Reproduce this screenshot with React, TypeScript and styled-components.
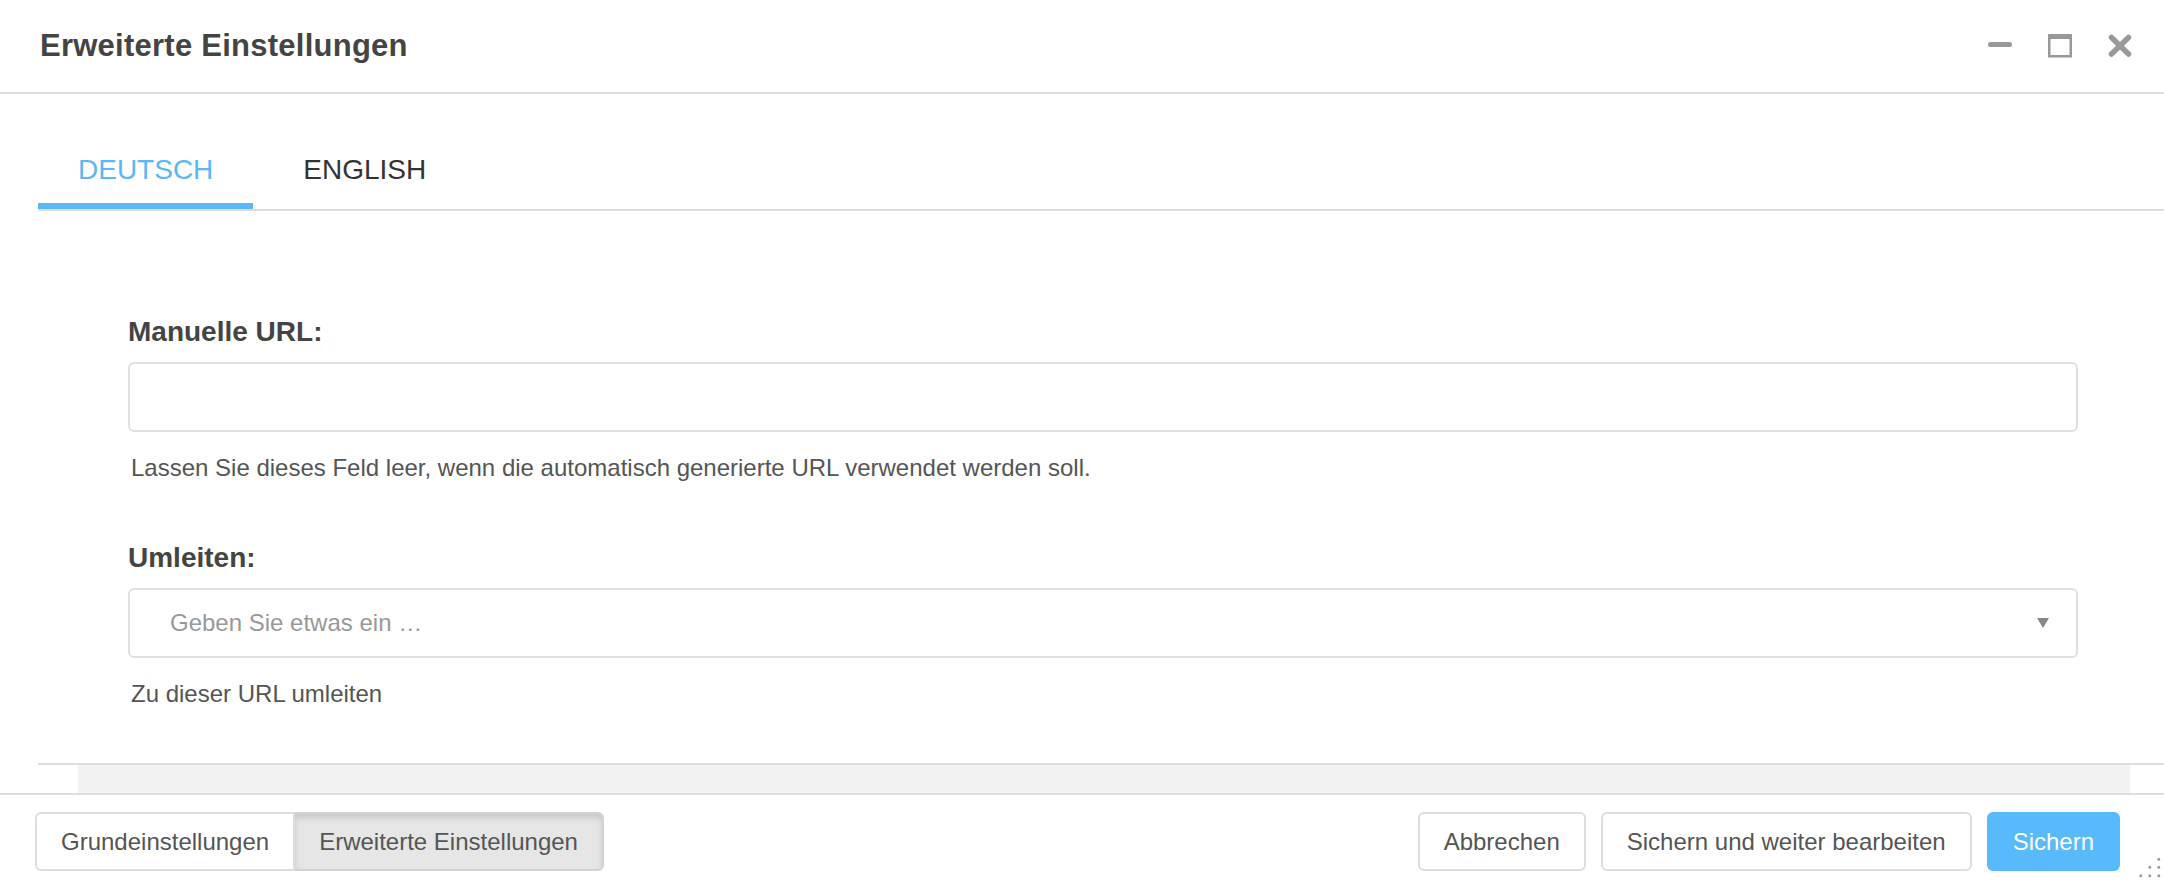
import React from 'react';
import styled, { createGlobalStyle, css } from 'styled-components';

const GlobalStyle = createGlobalStyle`
  html, body { margin: 0; padding: 0; background: #ffffff; }
  body { font-family: "Liberation Sans", Arial, Helvetica, sans-serif; }
  *, *::before, *::after { box-sizing: border-box; }
`;

const Window = styled.div`
  position: relative;
  width: 2164px;
  height: 886px;
  display: flex;
  flex-direction: column;
  background: #ffffff;
  overflow: hidden;
`;

const Header = styled.header`
  flex: none;
  height: 94px;
  display: flex;
  align-items: center;
  justify-content: space-between;
  padding: 0 32px 0 40px;
  border-bottom: 2px solid #dddddd;
`;

const Title = styled.h1`
  margin: 0;
  font-size: 31px;
  line-height: 36px;
  font-weight: 700;
  letter-spacing: 0.25px;
  color: #444444;
`;

const Controls = styled.div`
  display: flex;
  align-items: center;
  gap: 36px;
`;

const ControlButton = styled.button`
  display: flex;
  width: 24px;
  height: 24px;
  padding: 0;
  border: none;
  background: none;
  cursor: pointer;
  color: #999999;
`;

const TabsPanel = styled.section`
  flex: 1;
  min-height: 0;
  margin-left: 38px;
  display: flex;
  flex-direction: column;
  border-bottom: 2px solid #dddddd;
`;

const TabList = styled.div`
  flex: none;
  display: flex;
  gap: 10px;
  border-bottom: 2px solid #dddddd;
`;

const Tab = styled.button<{ $active?: boolean }>`
  padding: 59px 40px 16px;
  border: none;
  border-bottom: 6px solid ${(p) => (p.$active ? '#5ab8f7' : 'transparent')};
  background: none;
  font-family: inherit;
  font-size: 28px;
  line-height: 34px;
  color: ${(p) => (p.$active ? '#5ab8f7' : '#333333')};
  cursor: pointer;
`;

const Content = styled.div`
  flex: 1;
  padding: 104px 86px 0 90px;
`;

const Field = styled.div`
  display: flex;
  flex-direction: column;
  & + & {
    margin-top: 58px;
  }
`;

const Label = styled.label`
  font-size: 28px;
  line-height: 34px;
  font-weight: 700;
  color: #444444;
  margin-bottom: 13px;
`;

const TextInput = styled.input`
  width: 100%;
  height: 70px;
  border: 2px solid #e0e0e0;
  border-radius: 6px;
  padding: 0 20px;
  font-family: inherit;
  font-size: 24px;
  color: #333;
  outline: none;
`;

const SelectBox = styled.div`
  height: 70px;
  display: flex;
  align-items: center;
  border: 2px solid #e0e0e0;
  border-radius: 6px;
  padding: 0 27px 0 40px;
  cursor: pointer;
`;

const Placeholder = styled.span`
  flex: 1;
  font-size: 24px;
  line-height: 30px;
  color: #999999;
`;

const Help = styled.div`
  margin-top: 21px;
  padding-left: 3px;
  font-size: 24px;
  line-height: 30px;
  color: #555555;
`;

const Track = styled.div`
  flex: none;
  height: 28px;
  margin: 0 34px 0 78px;
  background: #f2f2f2;
`;

const Footer = styled.footer`
  flex: none;
  height: 93px;
  border-top: 2px solid #dddddd;
  padding: 17px 44px 0 35px;
  display: flex;
  justify-content: space-between;
  align-items: flex-start;
`;

const ButtonGroup = styled.div`
  display: flex;
`;

const Actions = styled.div`
  display: flex;
  gap: 15px;
`;

type Variant = 'default' | 'active' | 'primary';
type Join = 'none' | 'first' | 'last';

const Button = styled.button<{ $variant?: Variant; $join?: Join }>`
  height: 59px;
  padding: 0 24px;
  border: 2px solid #dddddd;
  border-radius: 6px;
  background: #ffffff;
  color: #555555;
  font-family: inherit;
  font-size: 24px;
  line-height: 1;
  cursor: pointer;
  white-space: nowrap;
  ${(p) =>
    p.$join === 'first' &&
    css`
      border-radius: 6px 0 0 6px;
    `}
  ${(p) =>
    p.$join === 'last' &&
    css`
      border-radius: 0 6px 6px 0;
      border-left: none;
    `}
  ${(p) =>
    p.$variant === 'active' &&
    css`
      background: #e6e6e6;
      border-color: #d2d2d2;
      box-shadow: inset 0 4px 6px rgba(0, 0, 0, 0.13);
    `}
  ${(p) =>
    p.$variant === 'primary' &&
    css`
      background: #58b9fb;
      border-color: #58b9fb;
      color: #ffffff;
    `}
`;

const Grip = styled.svg`
  position: absolute;
  right: 0;
  bottom: 0;
  width: 28px;
  height: 32px;
`;

const MinimizeIcon = () => (
  <svg width="24" height="24" viewBox="0 0 24 24">
    <rect x="0" y="8" width="24" height="5" rx="2.5" fill="currentColor" />
  </svg>
);

const MaximizeIcon = () => (
  <svg width="24" height="24" viewBox="0 0 24 24">
    <rect x="1.25" y="1.25" width="21.5" height="21" fill="none" stroke="currentColor" strokeWidth="2.5" />
    <rect x="0" y="0" width="24" height="5" fill="currentColor" />
  </svg>
);

const CloseIcon = () => (
  <svg width="24" height="24" viewBox="0 0 24 24">
    <path d="M3.5 3.5 L20.5 20 M20.5 3.5 L3.5 20" stroke="currentColor" strokeWidth="5.5" strokeLinecap="round" />
  </svg>
);

const ArrowDown = () => (
  <svg width="12" height="10" viewBox="0 0 12 10">
    <path d="M0 0 H12 L6 10 Z" fill="#888888" />
  </svg>
);

export default function App() {
  const [tab, setTab] = React.useState<'de' | 'en'>('de');
  return (
    <>
      <GlobalStyle />
      <Window>
        <Header>
          <Title>Erweiterte Einstellungen</Title>
          <Controls>
            <ControlButton aria-label="Minimieren">
              <MinimizeIcon />
            </ControlButton>
            <ControlButton aria-label="Maximieren">
              <MaximizeIcon />
            </ControlButton>
            <ControlButton aria-label="Schließen">
              <CloseIcon />
            </ControlButton>
          </Controls>
        </Header>

        <TabsPanel>
          <TabList>
            <Tab $active={tab === 'de'} onClick={() => setTab('de')}>
              DEUTSCH
            </Tab>
            <Tab $active={tab === 'en'} onClick={() => setTab('en')}>
              ENGLISH
            </Tab>
          </TabList>
          <Content>
            <Field>
              <Label>Manuelle URL:</Label>
              <TextInput type="text" />
              <Help>Lassen Sie dieses Feld leer, wenn die automatisch generierte URL verwendet werden soll.</Help>
            </Field>
            <Field>
              <Label>Umleiten:</Label>
              <SelectBox>
                <Placeholder>Geben Sie etwas ein …</Placeholder>
                <ArrowDown />
              </SelectBox>
              <Help>Zu dieser URL umleiten</Help>
            </Field>
          </Content>
        </TabsPanel>

        <Track />

        <Footer>
          <ButtonGroup>
            <Button $join="first">Grundeinstellungen</Button>
            <Button $join="last" $variant="active">
              Erweiterte Einstellungen
            </Button>
          </ButtonGroup>
          <Actions>
            <Button>Abbrechen</Button>
            <Button>Sichern und weiter bearbeiten</Button>
            <Button $variant="primary">Sichern</Button>
          </Actions>
        </Footer>

        <Grip viewBox="0 0 28 32">
          <g fill="#9a9a9a">
            <rect x="21.5" y="4" width="2.6" height="2.6" />
            <rect x="12.5" y="12" width="2.6" height="2.6" />
            <rect x="21.5" y="12" width="2.6" height="2.6" />
            <rect x="3.5" y="20.5" width="2.6" height="2.6" />
            <rect x="12.5" y="20.5" width="2.6" height="2.6" />
            <rect x="21.5" y="20.5" width="2.6" height="2.6" />
          </g>
        </Grip>
      </Window>
    </>
  );
}
